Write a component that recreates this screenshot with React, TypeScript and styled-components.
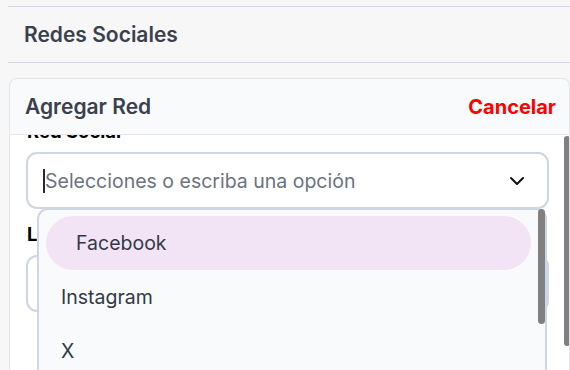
import React from "react";
import styled, { createGlobalStyle } from "styled-components";

const Global = createGlobalStyle`
  html, body { margin: 0; padding: 0; background: #f7f7f8; }
  body { font-family: Inter, "Noto Sans", sans-serif; width: 570px; height: 370px; overflow: hidden; }
  * { box-sizing: border-box; }
`;

const Page = styled.div`
  padding-top: 6px;
  height: 370px;
  overflow: hidden;
  display: flex;
  flex-direction: column;
`;

const SectionBar = styled.div`
  margin-left: 8px;
  height: 57px;
  border-top: 1px solid #d0d7e1;
  border-bottom: 1px solid #d0d7e1;
  display: flex;
  align-items: center;
  padding-left: 16px;
  font-size: 21px;
  font-weight: 600;
  color: #3a414d;
`;

const Card = styled.div`
  margin: 15px 0 0 9px;
  width: 561px;
  flex: 1;
  border: 1px solid #e3e6ea;
  border-bottom: none;
  border-radius: 8px 8px 0 0;
  background: #f9fafb;
  display: flex;
  flex-direction: column;
  overflow: hidden;
`;

const CardHeader = styled.div`
  height: 56px;
  flex: none;
  display: flex;
  align-items: center;
  justify-content: space-between;
  padding: 0 13px 0 15px;
  border-bottom: 1px solid #e3e6ea;
`;

const CardTitle = styled.span`
  font-size: 21px;
  font-weight: 600;
  color: #3a414d;
`;

const CancelButton = styled.button`
  border: none;
  background: none;
  padding: 0;
  font-family: inherit;
  font-size: 20px;
  font-weight: 700;
  color: #ff0000;
  cursor: pointer;
`;

const CardBody = styled.div`
  position: relative;
  flex: 1;
  background: #ffffff;
  overflow: hidden;
`;

const Scrolled = styled.div`
  margin-top: -16px;
  padding: 0 20px 0 16px;
  display: flex;
  flex-direction: column;
`;

const Field = styled.div`
  position: relative;
  display: flex;
  flex-direction: column;
  gap: 9px;
  margin-bottom: 13px;
`;

const Label = styled.label`
  font-size: 18.5px;
  font-weight: 700;
  color: #000;
  line-height: 24px;
  padding-left: 1px;
`;

const InputBox = styled.div`
  height: 57px;
  border: 2px solid #cdd6e2;
  border-radius: 11px;
  background: #fff;
  display: flex;
  align-items: center;
  padding: 0 22px 0 15px;
`;

const Caret = styled.span`
  width: 2px;
  height: 24px;
  background: #1f2937;
  flex: none;
`;

const Placeholder = styled.span`
  flex: 1;
  font-size: 19.5px;
  color: #6b7280;
`;

const Dropdown = styled.div`
  position: absolute;
  left: 11px;
  top: 89px;
  width: 510px;
  height: 200px;
  border: 2px solid #cdd6e2;
  border-bottom: none;
  border-radius: 11px 11px 0 0;
  background: #f8fafc;
  padding: 6px 0 0 7px;
  display: flex;
  flex-direction: column;
  z-index: 2;
`;

const Option = styled.div<{ $active?: boolean }>`
  width: 485px;
  height: 54px;
  flex: none;
  display: flex;
  align-items: center;
  padding-left: ${(p) => (p.$active ? "30px" : "15px")};
  border-radius: 27px;
  background: ${(p) => (p.$active ? "#f3e4f5" : "transparent")};
  font-size: 19.5px;
  color: #323946;
`;

const Thumb = styled.div<{ $left: number; $top: number; $h: number; $w: number }>`
  position: absolute;
  left: ${(p) => p.$left}px;
  top: ${(p) => p.$top}px;
  width: ${(p) => p.$w}px;
  height: ${(p) => p.$h}px;
  border-radius: 4px;
  background: #808080;
`;

const Chevron = () => (
  <svg width="16" height="10" viewBox="0 0 16 10" fill="none">
    <path d="M2 2l6 6 6-6" stroke="#111" strokeWidth="2" strokeLinecap="round" strokeLinejoin="round" />
  </svg>
);

export default function App() {
  return (
    <>
      <Global />
      <Page>
        <SectionBar>Redes Sociales</SectionBar>
        <Card>
          <CardHeader>
            <CardTitle>Agregar Red</CardTitle>
            <CancelButton>Cancelar</CancelButton>
          </CardHeader>
          <CardBody>
            <Scrolled>
              <Field>
                <Label>Red Social</Label>
                <InputBox>
                  <Caret />
                  <Placeholder>Selecciones o escriba una opción</Placeholder>
                  <Chevron />
                </InputBox>
                <Dropdown>
                  <Option $active>Facebook</Option>
                  <Option>Instagram</Option>
                  <Option>X</Option>
                  <Thumb $left={499} $top={-1} $w={7} $h={115} />
                </Dropdown>
              </Field>
              <Field>
                <Label>Link</Label>
                <InputBox />
              </Field>
            </Scrolled>
            <Thumb $left={554} $top={1} $w={6} $h={210} />
          </CardBody>
        </Card>
      </Page>
    </>
  );
}
